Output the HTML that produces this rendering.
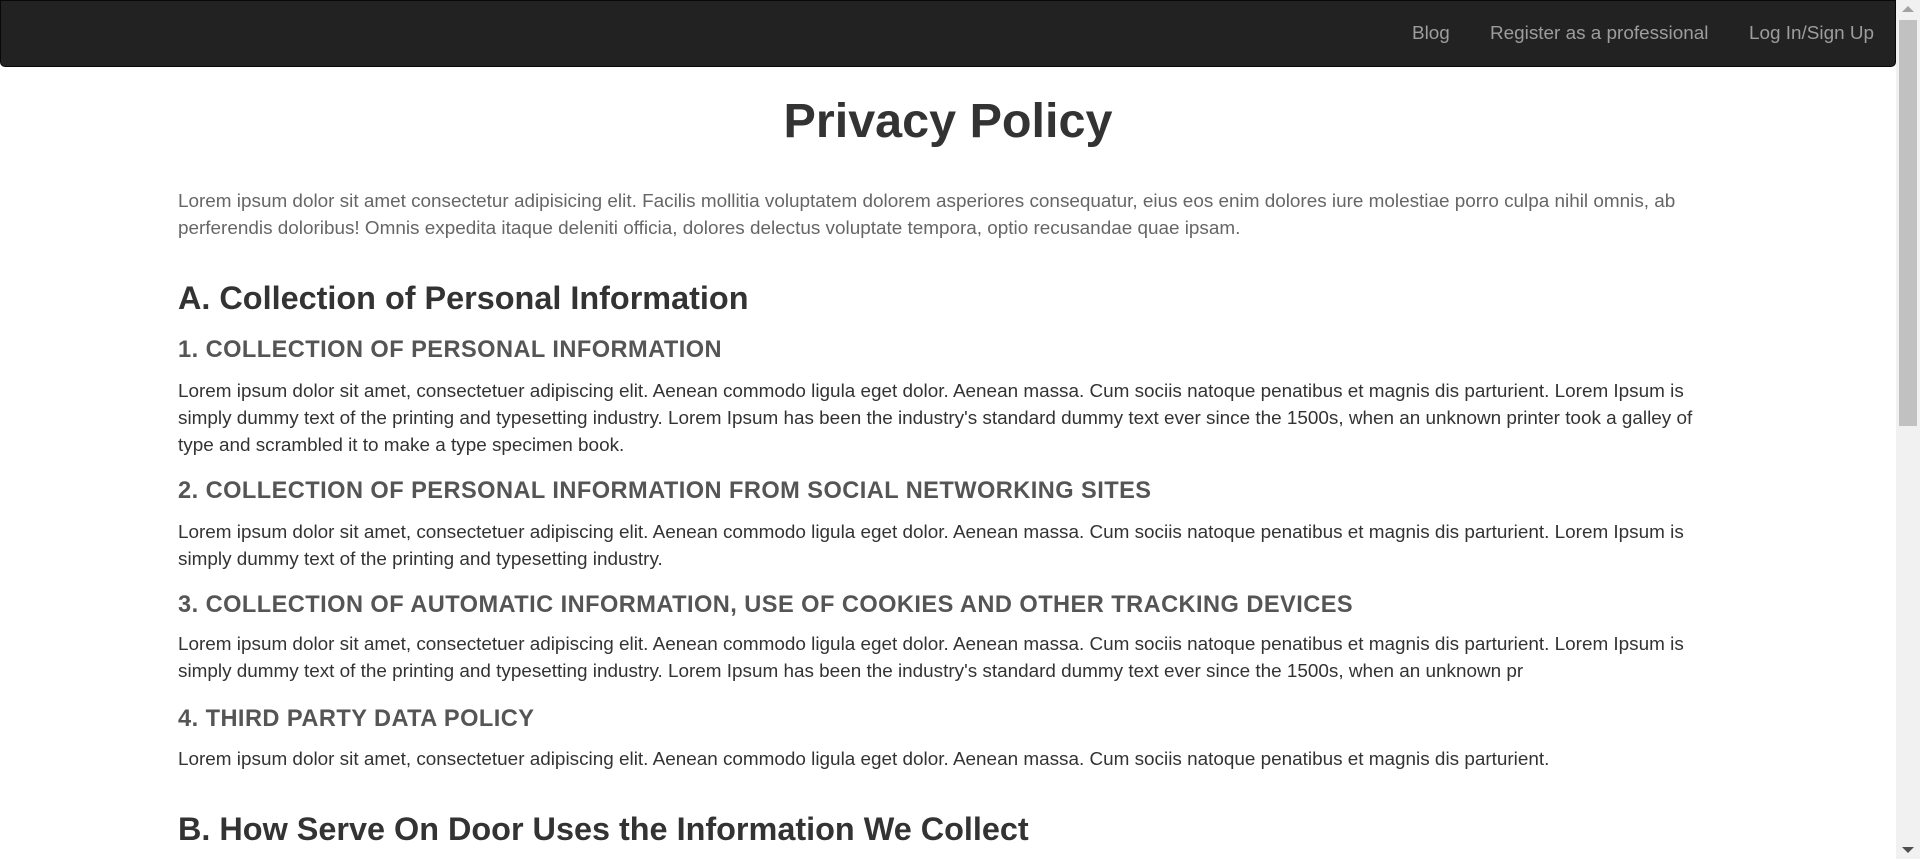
<!DOCTYPE html>
<html><head><meta charset="utf-8"><style>
html,body{margin:0;padding:0;width:1920px;height:859px;overflow:hidden;background:#fff;font-family:"Liberation Sans",Arial,sans-serif;}
.nav{position:absolute;left:0;top:0;width:1894px;height:65px;background:#222;border:1px solid #080808;border-radius:0 0 5px 5px;}
.nav a{position:absolute;top:22px;color:#9d9d9d;font-size:18.9px;text-decoration:none;white-space:nowrap;}
.sb{position:absolute;right:0;top:0;width:24px;height:859px;background:#f1f1f1;}
.thumb{position:absolute;right:3px;top:20px;width:18px;height:406px;background:#c1c1c1;}
.t{position:absolute;white-space:nowrap;}
.h1{left:0;width:1896px;text-align:center;top:93px;font-size:48.5px;font-weight:bold;color:#333;}
.intro{left:178px;color:#666;font-size:18.9px;line-height:27px;}
.h2{left:178px;font-size:32.4px;font-weight:bold;color:#333;}
.h4{left:178px;font-size:23.6px;font-weight:bold;color:#555;letter-spacing:0.45px;}
.p{left:178px;font-size:18.9px;line-height:27px;color:#333;}
</style></head><body>
<div class="nav">
<a style="left:1411px">Blog</a>
<a style="left:1489px">Register as a professional</a>
<a style="left:1748px">Log In/Sign Up</a>
</div>
<div class="sb"><div class="thumb"></div>
<div style="position:absolute;left:6px;top:6px;width:0;height:0;border-left:6px solid transparent;border-right:6px solid transparent;border-bottom:6px solid #a3a3a3"></div>
<div style="position:absolute;left:6px;bottom:6px;width:0;height:0;border-left:6px solid transparent;border-right:6px solid transparent;border-top:6px solid #505050"></div>
</div>
<div class="t h1">Privacy Policy</div>
<div class="t intro" style="top:188px">Lorem ipsum dolor sit amet consectetur adipisicing elit. Facilis mollitia voluptatem dolorem asperiores consequatur, eius eos enim dolores iure molestiae porro culpa nihil omnis, ab<br>perferendis doloribus! Omnis expedita itaque deleniti officia, dolores delectus voluptate tempora, optio recusandae quae ipsam.</div>
<div class="t h2" style="top:280px">A. Collection of Personal Information</div>
<div class="t h4" style="top:337px">1. COLLECTION OF PERSONAL INFORMATION</div>
<div class="t p" style="top:378px">Lorem ipsum dolor sit amet, consectetuer adipiscing elit. Aenean commodo ligula eget dolor. Aenean massa. Cum sociis natoque penatibus et magnis dis parturient. Lorem Ipsum is<br>simply dummy text of the printing and typesetting industry. Lorem Ipsum has been the industry's standard dummy text ever since the 1500s, when an unknown printer took a galley of<br>type and scrambled it to make a type specimen book.</div>
<div class="t h4" style="top:478px">2. COLLECTION OF PERSONAL INFORMATION FROM SOCIAL NETWORKING SITES</div>
<div class="t p" style="top:519px">Lorem ipsum dolor sit amet, consectetuer adipiscing elit. Aenean commodo ligula eget dolor. Aenean massa. Cum sociis natoque penatibus et magnis dis parturient. Lorem Ipsum is<br>simply dummy text of the printing and typesetting industry.</div>
<div class="t h4" style="top:592px">3. COLLECTION OF AUTOMATIC INFORMATION, USE OF COOKIES AND OTHER TRACKING DEVICES</div>
<div class="t p" style="top:631px">Lorem ipsum dolor sit amet, consectetuer adipiscing elit. Aenean commodo ligula eget dolor. Aenean massa. Cum sociis natoque penatibus et magnis dis parturient. Lorem Ipsum is<br>simply dummy text of the printing and typesetting industry. Lorem Ipsum has been the industry's standard dummy text ever since the 1500s, when an unknown pr</div>
<div class="t h4" style="top:706px">4. THIRD PARTY DATA POLICY</div>
<div class="t p" style="top:746px">Lorem ipsum dolor sit amet, consectetuer adipiscing elit. Aenean commodo ligula eget dolor. Aenean massa. Cum sociis natoque penatibus et magnis dis parturient.</div>
<div class="t h2" style="top:811px">B. How Serve On Door Uses the Information We Collect</div>
</body></html>
